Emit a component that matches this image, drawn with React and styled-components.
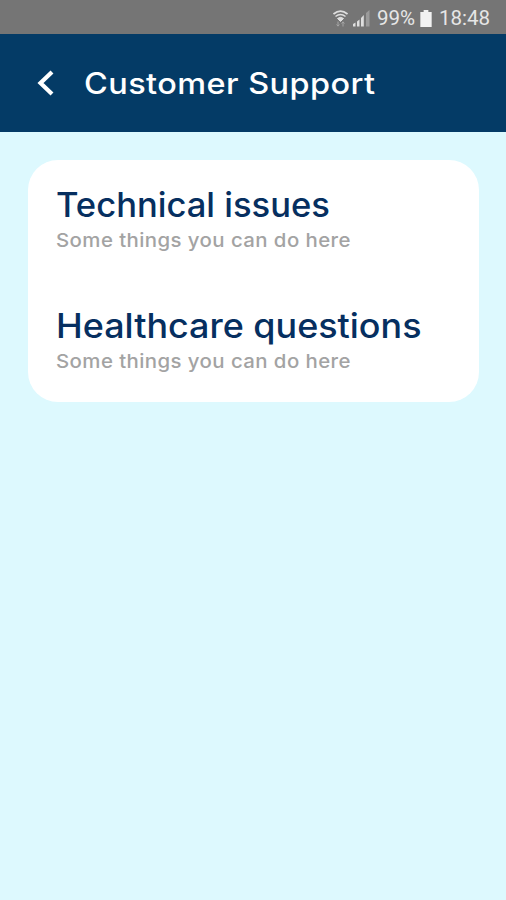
import React from 'react';
import styled, { createGlobalStyle } from 'styled-components';

const GlobalStyle = createGlobalStyle`
  * {
    box-sizing: border-box;
  }
  body {
    margin: 0;
    background: #ddf9fe;
    font-family: Inter, sans-serif;
  }
`;

const Screen = styled.div`
  min-height: 100vh;
  background: #ddf9fe;
`;

const StatusBar = styled.div`
  display: flex;
  align-items: center;
  justify-content: flex-end;
  height: 34px;
  padding: 2px 16px 0 0;
  background: #757575;
  color: #e6e6e6;
  font-family: Roboto, sans-serif;
  font-size: 20.5px;
  white-space: nowrap;
`;

const Battery = styled.svg`
  margin: 0 7px 0 5px;
`;

const Signal = styled.svg`
  margin: 0 7px 0 5px;
`;

const Header = styled.header`
  display: flex;
  align-items: center;
  height: 98px;
  padding-left: 36px;
  background: #043b66;
`;

const BackButton = styled.button`
  display: flex;
  width: 20px;
  margin-right: 28px;
  padding: 0;
  border: 0;
  background: none;
`;

// Wide letterforms: the text is stretched from its left edge
const Title = styled.h1`
  margin: 0;
  padding-bottom: 1px;
  color: #fff;
  font-size: 29.5px;
  font-weight: 450;
  line-height: 36px;
  letter-spacing: 0.4px;
  white-space: nowrap;
  transform: scaleX(1.1);
  transform-origin: left;
`;

const Card = styled.main`
  display: flex;
  flex-direction: column;
  gap: 52px;
  height: 242px;
  margin: 28px 27px 0 28px;
  padding: 24px 0 0 28px;
  border-radius: 30px;
  background: #fff;
`;

const Name = styled.h2`
  margin: 0;
  color: #062f60;
  font-size: 33.5px;
  font-weight: 450;
  line-height: 42px;
  white-space: nowrap;
  transform: scaleX(${(props) => props.$stretch});
  transform-origin: left;
`;

const Description = styled.p`
  margin: 0;
  padding-top: 3px;
  color: #a3a3a3;
  font-size: 19px;
  font-weight: 450;
  line-height: 24px;
  letter-spacing: 0.4px;
  white-space: nowrap;
  transform: scaleX(1.073);
  transform-origin: left;
`;

const supportData = [
  {
    name: 'Technical issues',
    description: 'Some things you can do here',
    stretch: 1.032,
  },
  {
    name: 'Healthcare questions',
    description: 'Some things you can do here',
    stretch: 1.072,
  },
];

const App = () => {
  return (
    <Screen>
      <GlobalStyle />
      <StatusBar>
        <svg width="15" height="17" viewBox="0 0 15 17" fill="none" stroke="#dedede">
          <path d="M0.5 4Q7.5 -1.8 14.5 4" strokeWidth="1.7" />
          <path d="M2.5 6.5Q7.5 2.6 12.5 6.5" strokeWidth="1.5" />
          <path d="M4.5 8.5Q7.5 6.2 10.5 8.5L7.5 11.5Z" fill="#dedede" strokeWidth="1" />
          <path d="M5 11.5V16M3.6 14.5L5 16.2L6.4 14.5M10 16.5V12M8.6 13.5L10 11.8L11.4 13.5" stroke="#a6a6a6" />
        </svg>
        <Signal width="17" height="17" viewBox="0 0 17 17" fill="#dedede">
          <path d="M0 16.5V14L2.5 12.5V16.5Z" />
          <path d="M4 16.5V11.5L6.5 9.5V16.5Z" />
          <path d="M8 16.5V8L10.8 5V16.5Z" />
          <path d="M13 16.5V3L16.5 0V16.5Z" fill="#9b9b9b" />
        </Signal>
        <span>99%</span>
        <Battery width="12" height="17" viewBox="0 0 12 18" fill="#f2f2f2">
          <path d="M3.5 0H8.5V2H12V18H0V2H3.5Z" />
        </Battery>
        <span>18:48</span>
      </StatusBar>
      <Header>
        <BackButton aria-label="Back">
          <svg width="20" height="28" viewBox="0 0 20 28" fill="none">
            <path d="M16 3L4.5 14L16 25" stroke="#fff" strokeWidth="4.2" />
          </svg>
        </BackButton>
        <Title>Customer Support</Title>
      </Header>
      <Card>
        {supportData.map((item, index) => (
          <section key={index}>
            <Name $stretch={item.stretch}>{item.name}</Name>
            <Description>{item.description}</Description>
          </section>
        ))}
      </Card>
    </Screen>
  );
};

export default App;
